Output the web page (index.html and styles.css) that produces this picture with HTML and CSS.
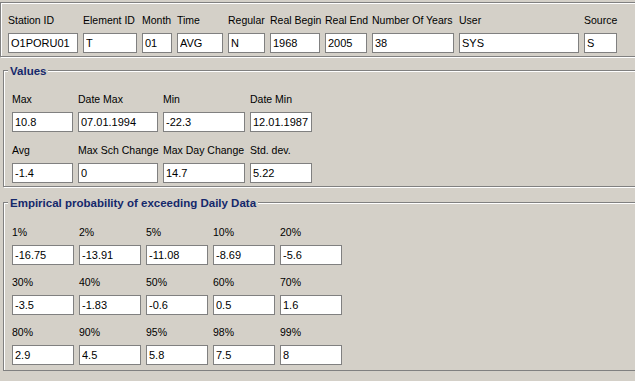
FILE: index.html
```html
<!DOCTYPE html>
<html lang="en">
<head>
    <meta charset="UTF-8">
    <meta name="viewport" content="width=device-width, initial-scale=1.0">
    <title>Station Statistics</title>
    <link rel="stylesheet" href="styles.css">
</head>
<body>
    <div class="header-panel">
        <div class="field"><label>Station ID</label><input type="text" value="O1PORU01" readonly></div>
        <div class="field"><label>Element ID</label><input type="text" value="T" readonly></div>
        <div class="field"><label>Month</label><input type="text" value="01" readonly></div>
        <div class="field"><label>Time</label><input type="text" value="AVG" readonly></div>
        <div class="field"><label>Regular</label><input type="text" value="N" readonly></div>
        <div class="field"><label>Real Begin</label><input type="text" value="1968" readonly></div>
        <div class="field"><label>Real End</label><input type="text" value="2005" readonly></div>
        <div class="field"><label>Number Of Years</label><input type="text" value="38" readonly></div>
        <div class="field"><label>User</label><input type="text" value="SYS" readonly></div>
        <div class="field"><label>Source</label><input type="text" value="S" readonly></div>
    </div>

    <div class="group group-values">
        <h2 class="group-title">Values</h2>
        <div class="values-grid">
            <div class="field"><label>Max</label><input type="text" value="10.8" readonly></div>
            <div class="field"><label>Date Max</label><input type="text" value="07.01.1994" readonly></div>
            <div class="field"><label>Min</label><input type="text" value="-22.3" readonly></div>
            <div class="field"><label>Date Min</label><input type="text" value="12.01.1987" readonly></div>
            <div class="field"><label>Avg</label><input type="text" value="-1.4" readonly></div>
            <div class="field"><label>Max Sch Change</label><input type="text" value="0" readonly></div>
            <div class="field"><label>Max Day Change</label><input type="text" value="14.7" readonly></div>
            <div class="field"><label>Std. dev.</label><input type="text" value="5.22" readonly></div>
        </div>
    </div>

    <div class="group group-empirical">
        <h2 class="group-title">Empirical probability of exceeding Daily Data</h2>
        <div class="prob-grid">
            <div class="field"><label>1%</label><input type="text" value="-16.75" readonly></div>
            <div class="field"><label>2%</label><input type="text" value="-13.91" readonly></div>
            <div class="field"><label>5%</label><input type="text" value="-11.08" readonly></div>
            <div class="field"><label>10%</label><input type="text" value="-8.69" readonly></div>
            <div class="field"><label>20%</label><input type="text" value="-5.6" readonly></div>
            <div class="field"><label>30%</label><input type="text" value="-3.5" readonly></div>
            <div class="field"><label>40%</label><input type="text" value="-1.83" readonly></div>
            <div class="field"><label>50%</label><input type="text" value="-0.6" readonly></div>
            <div class="field"><label>60%</label><input type="text" value="0.5" readonly></div>
            <div class="field"><label>70%</label><input type="text" value="1.6" readonly></div>
            <div class="field"><label>80%</label><input type="text" value="2.9" readonly></div>
            <div class="field"><label>90%</label><input type="text" value="4.5" readonly></div>
            <div class="field"><label>95%</label><input type="text" value="5.8" readonly></div>
            <div class="field"><label>98%</label><input type="text" value="7.5" readonly></div>
            <div class="field"><label>99%</label><input type="text" value="8" readonly></div>
        </div>
    </div>
</body>
</html>
```

FILE: styles.css
```css
* {
    box-sizing: border-box;
    margin: 0;
    padding: 0;
}
body {
    font-family: "Liberation Sans", Arial, sans-serif;
    font-size: 10.5px;
    color: #000;
    background-color: #d4d0c8;
    overflow: hidden;
}
.field {
    display: flex;
    flex-direction: column;
    gap: 6px;
    min-width: 0;
}
.field label {
    line-height: 13px;
    white-space: nowrap;
}
.field input {
    width: 100%;
    height: 20px;
    padding: 0 2px;
    border: 1px solid #808080;
    background-color: #fff;
    font: inherit;
    font-size: 11px;
    color: #000;
    outline: none;
}
.header-panel {
    margin-top: 2px;
    padding: 11px 0 3px 7px;
    border: 1px solid #808080;
    border-right: none;
    box-shadow: inset 1px 1px 0 #fff, 1px 1px 0 #fff;
    display: grid;
    grid-template-columns: 70px 54px 30px 46px 37px 50px 42px 82px 120px 33px;
    column-gap: 5px;
}
.group {
    position: relative;
    margin-left: 3px;
    border: 1px solid #808080;
    border-right: none;
    box-shadow: inset 1px 1px 0 #fff, 1px 1px 0 #fff;
}
.group-title {
    position: absolute;
    top: -6px;
    left: 4px;
    padding: 0 2px;
    background-color: #d4d0c8;
    color: #15286b;
    font-size: 11.5px;
    font-weight: bold;
    line-height: 13px;
    white-space: nowrap;
}
.group-values {
    margin-top: 13px;
    padding: 22px 0 3px 8px;
}
.group-empirical {
    margin-top: 15px;
    padding: 23px 0 5px 8px;
}
.values-grid {
    display: grid;
    grid-template-columns: 61px 80px 82px 62px;
    column-gap: 5px;
    row-gap: 12px;
}
.prob-grid {
    display: grid;
    grid-template-columns: repeat(5, 62px);
    column-gap: 5px;
    row-gap: 11px;
}
```
